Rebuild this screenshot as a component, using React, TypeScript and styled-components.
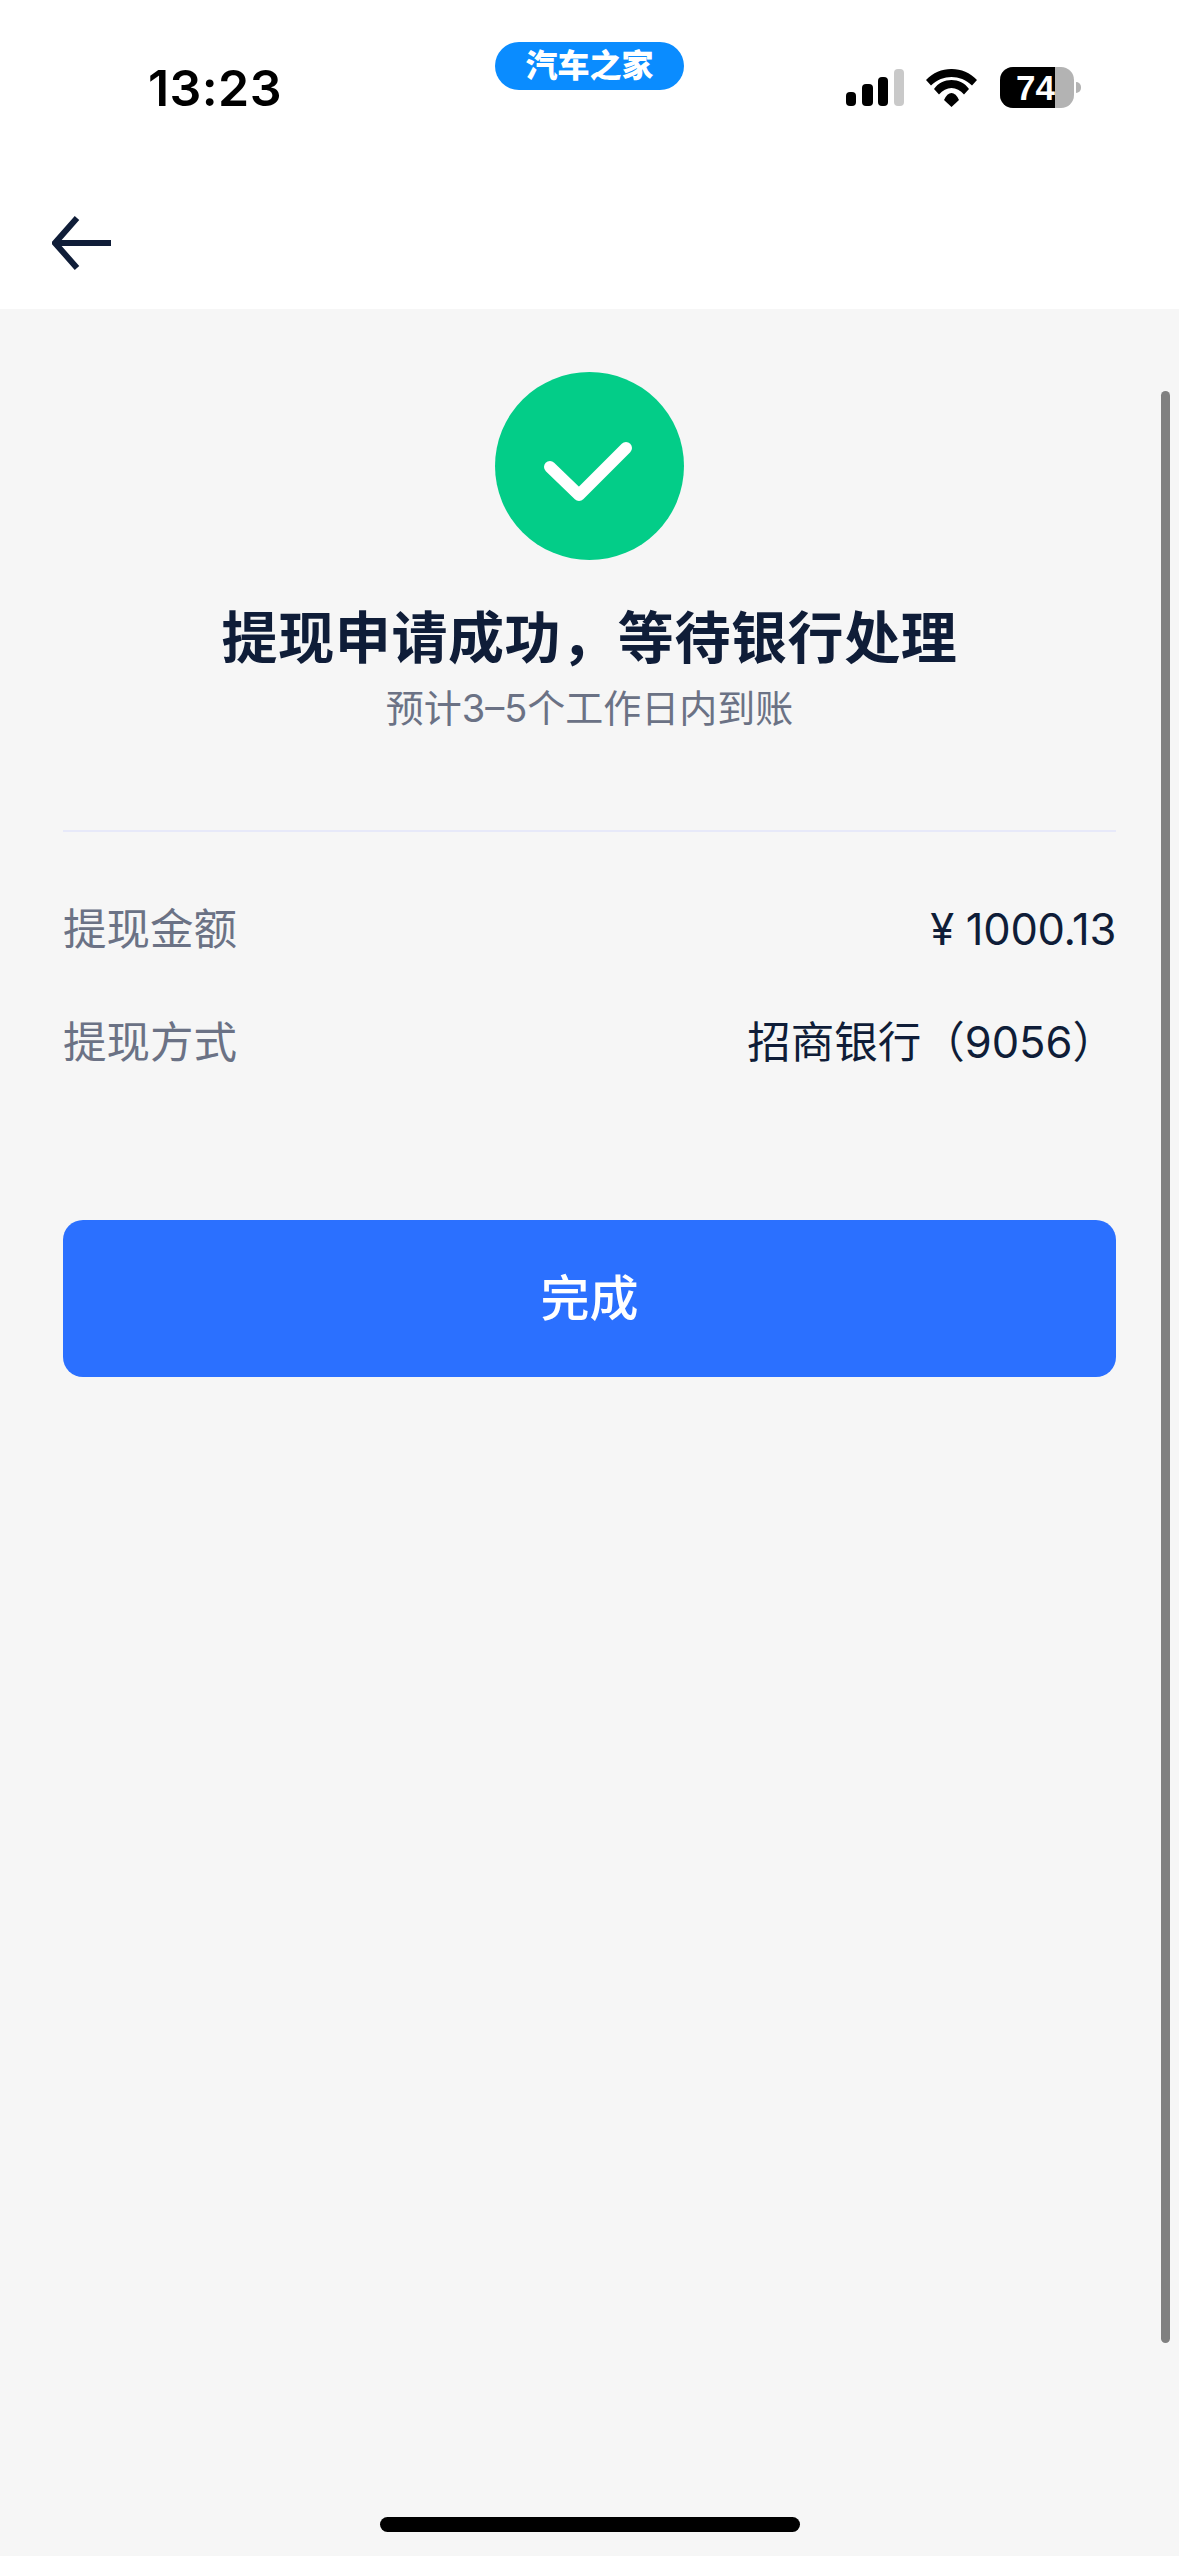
import React from "react";
import styled, { createGlobalStyle } from "styled-components";

const FONT = `Inter, "Noto Sans CJK SC", "Noto Sans", sans-serif`;

const Global = createGlobalStyle`
  html, body { margin: 0; padding: 0; background: #f6f6f6; }
  * { box-sizing: border-box; }
`;

const Page = styled.div`
  position: relative;
  width: 1179px;
  height: 2556px;
  overflow: hidden;
  background: #f6f6f6;
  font-family: ${FONT};
`;

const Header = styled.header`
  background: #fff;
  height: 309px;
  display: flex;
  flex-direction: column;
`;

const StatusBar = styled.div`
  height: 150px;
  padding: 42px 98px 0 148px;
  display: grid;
  grid-template-columns: 347px 189px 1fr;
  align-items: start;
`;

const Time = styled.div`
  margin-top: 16px;
  font-size: 50px;
  line-height: 60px;
  font-weight: 600;
  color: #000;
  letter-spacing: 0.4px;
`;

const AppPill = styled.div`
  height: 48px;
  border-radius: 24px;
  background: #0a8cff;
  color: #fff;
  font-size: 32px;
  font-weight: 900;
  line-height: 48px;
  text-align: center;
`;

const StatusIcons = styled.div`
  margin-top: 25px;
  display: flex;
  justify-content: flex-end;
  align-items: center;
  height: 41px;
`;

const SignalIcon = styled.svg`
  width: 58px;
  height: 37px;
  margin-right: 22px;
  display: block;
`;

const WifiIcon = styled.svg`
  width: 51px;
  height: 38px;
  margin-right: 23px;
  display: block;
`;

const Battery = styled.div`
  position: relative;
  width: 74px;
  height: 41px;
  border-radius: 13px;
  background: #b3b3b3;
  overflow: hidden;
`;

const BatteryFill = styled.div`
  height: 100%;
  background: #000;
`;

const BatteryLevel = styled.span`
  position: absolute;
  left: 16px;
  top: 0;
  color: #fff;
  font-family: "Liberation Sans", sans-serif;
  font-size: 35px;
  line-height: 41px;
  font-weight: 700;
`;

const BatteryNub = styled.div`
  width: 5px;
  height: 11px;
  margin-left: 2px;
  border-radius: 0 6px 6px 0;
  background: #b3b3b3;
`;

const NavBar = styled.nav`
  flex: 1;
  padding: 66px 0 0 52px;
`;

const BackIcon = styled.svg`
  width: 60px;
  height: 56px;
  display: block;
`;

const Body = styled.main`
  padding: 63px 63px 0;
  display: flex;
  flex-direction: column;
`;

const Hero = styled.section`
  display: flex;
  flex-direction: column;
  align-items: center;
`;

const SuccessBadge = styled.svg`
  width: 189px;
  height: 188px;
  display: block;
`;

const Title = styled.h1`
  margin: 46px 0 0;
  font-size: 56px;
  line-height: 64px;
  font-weight: 700;
  letter-spacing: 0.6px;
  color: #0f1d38;
  white-space: nowrap;
`;

const Subtitle = styled.p`
  margin: 16px 0 0;
  font-size: 38px;
  line-height: 44px;
  font-weight: 400;
  color: #6b7285;
  white-space: nowrap;
`;

const Divider = styled.hr`
  margin: 100px 0 40px;
  border: 0;
  height: 2px;
  background: #e7e9f9;
`;

const Row = styled.div`
  height: 113px;
  display: flex;
  justify-content: space-between;
  align-items: center;
  font-size: 43.5px;
  line-height: 56px;
`;

const Label = styled.span`
  color: #6b7285;
`;

const Value = styled.span<{ $tight?: boolean }>`
  color: #0f1d38;
  letter-spacing: ${(p) => (p.$tight ? "-0.3px" : "0")};
`;

const DoneButton = styled.button`
  margin-top: 122px;
  height: 157px;
  padding: 0 0 8px;
  border: 0;
  border-radius: 20px;
  background: #2b70ff;
  color: #fff;
  font-family: ${FONT};
  font-size: 49px;
  font-weight: 500;
`;

const Scrollbar = styled.div`
  position: absolute;
  left: 1161px;
  top: 391px;
  width: 9px;
  height: 1952px;
  border-radius: 5px;
  background: #808080;
`;

const HomeIndicator = styled.div`
  position: absolute;
  left: 380px;
  top: 2517px;
  width: 420px;
  height: 15px;
  border-radius: 8px;
  background: #000;
`;

export default function App() {
  return (
    <Page>
      <Global />
      <Header>
        <StatusBar>
          <Time>13:23</Time>
          <AppPill>汽车之家</AppPill>
          <StatusIcons>
            <SignalIcon viewBox="0 0 58 37">
              <rect x="0" y="23" width="10" height="14" rx="4" fill="#000" />
              <rect x="16" y="15" width="11" height="22" rx="4" fill="#000" />
              <rect x="32" y="8" width="10" height="29" rx="4" fill="#000" />
              <rect x="48" y="0" width="10" height="37" rx="4" fill="#c9c9c9" />
            </SignalIcon>
            <WifiIcon viewBox="0 0 51 38">
              <path d="M0 11 C14 -3.670 37 -3.670 51 11 L46 16.500 C34 5.170 17 5.170 5 16.500 Z" fill="#000" />
              <path d="M8 20 C16 8 35 8 43 20 L38 25.500 C31 16.800 20 16.800 13 25.500 Z" fill="#000" />
              <path d="M18 31 C22 21.700 29 21.700 33 31 L25.500 38 Z" fill="#000" />
            </WifiIcon>
            <Battery>
              <BatteryFill style={{ width: "74%" }} />
              <BatteryLevel>74</BatteryLevel>
            </Battery>
            <BatteryNub />
          </StatusIcons>
        </StatusBar>
        <NavBar>
          <BackIcon viewBox="0 0 60 56">
            <path d="M25 2 L3 27 L25 52 M3 27 H59" fill="none" stroke="#0f1d38" strokeWidth="6" />
          </BackIcon>
        </NavBar>
      </Header>
      <Body>
        <Hero>
          <SuccessBadge viewBox="0 0 189 188">
            <ellipse cx="94.500" cy="94" rx="94.500" ry="94" fill="#03cd88" />
            <path d="M55 95 L84 123 L131 76" fill="none" stroke="#fff" strokeWidth="12" strokeLinecap="round" strokeLinejoin="round" />
          </SuccessBadge>
          <Title>提现申请成功，等待银行处理</Title>
          <Subtitle>预计3–5个工作日内到账</Subtitle>
        </Hero>
        <Divider />
        <Row>
          <Label>提现金额</Label>
          <Value $tight>¥ 1000.13</Value>
        </Row>
        <Row>
          <Label>提现方式</Label>
          <Value>招商银行（9056）</Value>
        </Row>
        <DoneButton>完成</DoneButton>
      </Body>
      <Scrollbar />
      <HomeIndicator />
    </Page>
  );
}
